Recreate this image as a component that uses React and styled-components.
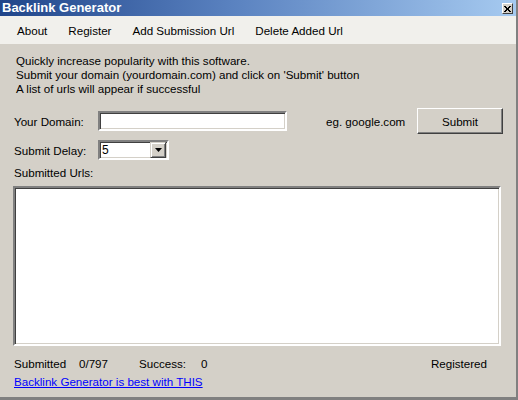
import React from 'react'
import styled, { createGlobalStyle } from 'styled-components'

const Global = createGlobalStyle`
  html, body {
    margin: 0;
    padding: 0;
    background: #d4d0c8;
  }
  * { box-sizing: border-box; }
`

const Window = styled.div`
  width: 518px;
  height: 400px;
  background: #d4d0c8;
  border-right: 2px solid #808080;
  border-bottom: 3px solid #808080;
  display: flex;
  flex-direction: column;
  font-family: "Liberation Sans", Arial, sans-serif;
  font-size: 11.6px;
  color: #000;
  overflow: hidden;
`

const TitleBar = styled.div`
  height: 16px;
  display: flex;
  align-items: center;
  justify-content: space-between;
  padding: 0 3px 0 2px;
  background: linear-gradient(90deg, #20458a 0%, #5a82c0 45%, #a6caf0 100%);
`

const Title = styled.span`
  color: #fff;
  font-weight: bold;
  font-size: 13px;
  font-family: "Liberation Sans", Arial, sans-serif;
  line-height: 16px;
`

const CloseBtn = styled.div`
  width: 11px;
  height: 11px;
  margin-top: 1px;
  background: #d4d0c8;
  border: 1px solid;
  border-color: #fff #404040 #404040 #fff;
  display: flex;
  align-items: center;
  justify-content: center;
`

const MenuBar = styled.div`
  height: 28px;
  background: #f1f0ec;
  display: flex;
  align-items: center;
  padding-left: 17px;
  gap: 21px;
`

const MenuItem = styled.span`
  font-size: 11.6px;
`

const Content = styled.div`
  display: flex;
  flex-direction: column;
  padding: 0 0 0 14px;
`

const Intro = styled.div`
  margin-top: 10px;
  padding-left: 2px;
  line-height: 14px;
`

const Row = styled.div`
  display: flex;
  align-items: center;
  height: ${p => p.$h}px;
  margin-top: ${p => p.$mt}px;
`

const Label = styled.span`
  width: 84px;
  flex-shrink: 0;
`

const Sunken = styled.div`
  background: #fff;
  border: 2px solid;
  border-color: #808080 #fff #fff #808080;
  box-shadow: inset 1px 1px 0 #404040, inset -1px -1px 0 #d4d0c8;
`

const TextBox = styled(Sunken)`
  width: 189px;
  height: 20px;
`

const Hint = styled.span`
  margin-left: 39px;
  width: 91px;
`

const Button = styled.div`
  width: 86px;
  height: 26px;
  background: #d4d0c8;
  border: 1px solid;
  border-color: #fff #404040 #404040 #fff;
  box-shadow: inset -1px -1px 0 #808080;
  display: flex;
  align-items: center;
  justify-content: center;
`

const Combo = styled(Sunken)`
  width: 71px;
  height: 20px;
  display: flex;
  align-items: center;
  justify-content: space-between;
  padding-left: 2px;
  padding-right: 1px;
`

const ComboValue = styled.span`
  font-size: 12px;
  line-height: 14px;
`

const DropBtn = styled.div`
  width: 16px;
  height: 16px;
  background: #d4d0c8;
  border: 1px solid;
  border-color: #d4d0c8 #404040 #404040 #d4d0c8;
  box-shadow: inset 1px 1px 0 #fff, inset -1px -1px 0 #808080;
  display: flex;
  align-items: center;
  justify-content: center;
`

const SectionLabel = styled.div`
  margin-top: 6px;
  line-height: 14px;
`

const UrlList = styled(Sunken)`
  margin-top: 6px;
  margin-left: -1px;
  width: 488px;
  height: 160px;
`

const StatusRow = styled.div`
  display: flex;
  align-items: center;
  margin-top: 11px;
  line-height: 14px;
`

const Stat = styled.span`
  width: ${p => p.$w}px;
  flex-shrink: 0;
`

const Registered = styled.span`
  margin-left: auto;
  margin-right: 29px;
`

const Link = styled.a`
  margin-top: 4px;
  color: #0000ff;
  text-decoration: underline;
  line-height: 14px;
  align-self: flex-start;
`

export default function App() {
  return (
    <>
      <Global />
      <Window>
        <TitleBar>
          <Title>Backlink Generator</Title>
          <CloseBtn>
            <svg width="7" height="6" viewBox="0 0 7 6">
              <path d="M0 0L6 6M1 0L7 6M6 0L0 6M7 0L1 6" stroke="#000" strokeWidth="1" />
            </svg>
          </CloseBtn>
        </TitleBar>
        <MenuBar>
          <MenuItem>About</MenuItem>
          <MenuItem>Register</MenuItem>
          <MenuItem>Add Submission Url</MenuItem>
          <MenuItem>Delete Added Url</MenuItem>
        </MenuBar>
        <Content>
          <Intro>
            Quickly increase popularity with this software.<br />
            Submit your domain (yourdomain.com) and click on 'Submit' button<br />
            A list of urls will appear if successful
          </Intro>
          <Row $h={26} $mt={12}>
            <Label>Your Domain:</Label>
            <TextBox />
            <Hint>eg. google.com</Hint>
            <Button>Submit</Button>
          </Row>
          <Row $h={20} $mt={6}>
            <Label>Submit Delay:</Label>
            <Combo>
              <ComboValue>5</ComboValue>
              <DropBtn>
                <svg width="7" height="4" viewBox="0 0 7 4">
                  <path d="M0 0H7L3.5 4Z" fill="#000" />
                </svg>
              </DropBtn>
            </Combo>
          </Row>
          <SectionLabel>Submitted Urls:</SectionLabel>
          <UrlList />
          <StatusRow>
            <Stat $w={65}>Submitted</Stat>
            <Stat $w={60}>0/797</Stat>
            <Stat $w={62}>Success:</Stat>
            <Stat $w={20}>0</Stat>
            <Registered>Registered</Registered>
          </StatusRow>
          <Link href="#">Backlink Generator is best with THIS</Link>
        </Content>
      </Window>
    </>
  )
}
